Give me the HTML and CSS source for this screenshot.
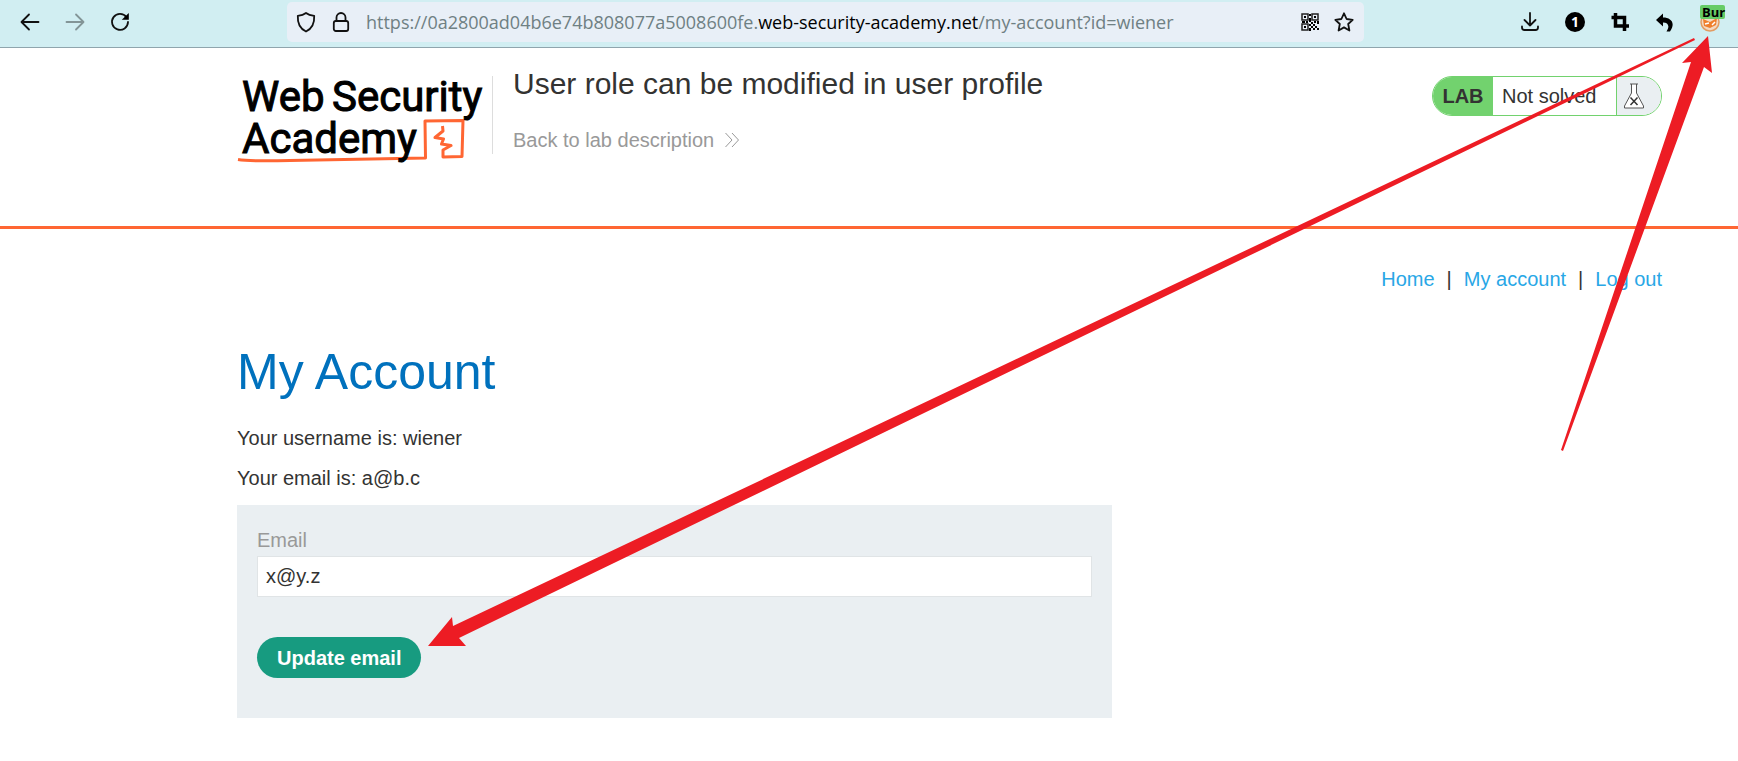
FILE: index.html
```html
<!DOCTYPE html>
<html lang="en">
<head>
<meta charset="utf-8">
<title>User role can be modified in user profile</title>
<link rel="stylesheet" href="styles.css">
</head>
<body>
<div class="toolbar">
  <div class="history">
    <button class="tool" aria-label="Back"><svg width="20" height="20" viewBox="0 0 20 20"><path d="M18.500 10H2M9 2.500L1.500 10L9 17.500" class="line"/></svg></button>
    <button class="tool faded" aria-label="Forward"><svg width="20" height="20" viewBox="0 0 20 20"><path d="M1.500 10H18M11 2.500L18.500 10L11 17.500" class="line"/></svg></button>
    <button class="tool" aria-label="Reload"><svg width="20" height="20" viewBox="0 0 20 20"><path d="M16.500 5.200A8 8 0 1 0 18 10" class="line"/><path d="M18.800 1v6.700h-7z"/></svg></button>
  </div>
  <div class="address">
    <svg width="20" height="22" viewBox="0 0 20 22"><path d="M10 2C12.500 4 15 4.500 18.200 4.800C18.600 12 16.500 17.500 10 20.500C3.500 17.500 1.400 12 1.800 4.800C5 4.500 7.500 4 10 2Z" class="line"/></svg>
    <svg width="20" height="22" viewBox="0 0 20 22"><rect x="2.800" y="10" width="14.400" height="10" rx="2" class="line"/><path d="M5.500 10V6.500a4.500 4.500 0 0 1 9 0V10" class="line"/></svg>
    <div class="url" role="textbox" aria-label="Address">https://0a2800ad04b6e74b808077a5008600fe.<span class="domain">web-security-academy.net</span>/my-account?id=wiener</div>
    <button class="tool" aria-label="QR code"><svg width="18" height="18" viewBox="0 0 18 18"><path class="qr" d="M1 1h6v6H1zM11 1h6v6h-6zM1 11h6v6H1z"/><path d="M3 3h2v2H3zM13 3h2v2h-2zM3 13h2v2H3zM8 1h2v2H8zM8 5h2v4H8zM1 8h3v2H1zM5 8h2v2H5zM10 9h2v2h-2zM13 8h2v2h-2zM16 8h2v3h-2zM8 11h2v2H8zM12 11h2v2h-2zM14 13h2v2h-2zM10 13h2v2h-2zM8 15h2v3H8zM12 15h2v2h-2zM16 15h2v2h-2z"/></svg></button>
    <button class="tool" aria-label="Bookmark"><svg width="20" height="20" viewBox="0 0 20 20"><path d="M10 1.300L12.600 7L18.700 7.800L14.200 12L15.400 18.500L10 15.400L4.600 18.500L5.800 12L1.300 7.800L7.400 7Z" class="line"/></svg></button>
  </div>
  <div class="extensions">
    <button class="tool" aria-label="Downloads"><svg width="20" height="20" viewBox="0 0 20 20"><path d="M10 1V13.500M4.500 8L10 13.500L15.500 8M2 14.500V15.500Q2 18 4.500 18H15.500Q18 18 18 15.500V14.500" class="line"/></svg></button>
    <button class="tool" aria-label="Counter"><span class="count">1</span></button>
    <button class="tool" aria-label="Crop"><svg width="20" height="20" viewBox="0 0 20 20"><path d="M5.500 1V14H19M1.500 5.500H14.500V19" fill="none" stroke="#000" stroke-width="3.500"/></svg></button>
    <button class="tool" aria-label="Undo"><svg width="20" height="20" viewBox="0 0 20 20"><path d="M1 8L8 1.500V5.500C16 5.500 21 11 15 19.500H11.500C15 14.500 13.500 10.500 8 10.500V14.500Z"/></svg></button>
    <button class="tool proxy" aria-label="Proxy: Bur"><svg width="20" height="20" viewBox="0 0 20 20"><circle cx="10" cy="10" r="9" fill="#f3d9c2" stroke="#e29b62" stroke-width="1.500"/><path d="M3 7L10 10L17 6L16 13L10 16L4 14Z" fill="#ef7f2d"/><path d="M5 12L9 11M12 13L15 10" stroke="#fff" stroke-width="1.500"/></svg><span class="badge">Bur</span></button>
  </div>
</div>

<header class="lab-header">
  <a class="logo" href="#" aria-label="Web Security Academy">
    <svg width="255" height="96" viewBox="237 70 255 96">
      <path d="M238 159.500Q250 161.500 290 160.500L425.500 158L425 121L463 120.500L462 156.500L443 157L443 150L451 145.500L441.500 144L443.500 139L435 137.500L443 131L442.500 126" class="logo-line"/>
      <g class="logo-text"><text x="242" y="111">Web</text><text x="332" y="111">Security</text><text x="242" y="153">Academy</text></g>
    </svg>
  </a>
  <div class="title">
    <h2>User role can be modified in user profile</h2>
    <a class="back" href="#">Back to lab description <svg width="16" height="16" viewBox="0 0 16 16"><path d="M1.500 1L8 8L1.500 15M8 1L14.500 8L8 15" fill="none" stroke="#999"/></svg></a>
  </div>
  <div class="status">
    <span class="lab">LAB</span>
    <p>Not solved</p>
    <span class="flask"><svg width="22" height="26" viewBox="0 0 22 26"><path d="M7 1H15M8.500 1V10L1.500 23V25H20.500V23L13.500 10V1" fill="#fff" stroke="#555"/><path d="M7.500 14.500L14.500 22M14.500 14.500L7.500 22" stroke="#333" stroke-width="1.500"/></svg></span>
  </div>
</header>

<main class="page">
  <nav class="links"><a href="#">Home</a><span>|</span><a href="#">My account</a><span>|</span><a href="#">Log out</a></nav>
  <h1>My Account</h1>
  <p class="fact">Your username is: wiener</p>
  <p class="fact">Your email is: a@b.c</p>
  <form class="email-form">
    <label for="email">Email</label>
    <input id="email" type="email" value="x@y.z">
    <button type="button">Update email</button>
  </form>
</main>

<svg class="arrows" width="1738" height="761" viewBox="0 0 1738 761" aria-hidden="true">
  <path d="M428 646L452 617L453 626L1694 38L1695 40L459 638L466 646Z"/>
  <path d="M1708 36L1682 63L1691 62L1561 450L1563 451L1704 67L1712 73Z"/>
</svg>
</body>
</html>
```
FILE: styles.css
```css
* { box-sizing: border-box; }
body {
  margin: 0;
  background: #fff;
  color: #333332;
  font: 20px/24px "Liberation Sans", Arial, sans-serif;
  overflow-x: hidden;
}
h1, h2, p { margin: 0; font-weight: 400; }
a { text-decoration: none; }
svg { display: block; flex: none; }

/* Browser toolbar */
.toolbar {
  display: flex;
  height: 48px;
  padding: 2px 18px 5px 20px;
  background: #d1eef2;
  border-bottom: 1px solid #8fa5ad;
}
.history, .extensions { display: flex; align-items: center; }
.history { gap: 25px; width: 267px; }
.extensions { gap: 25px; margin-left: 156px; }
.tool {
  position: relative;
  display: block;
  padding: 0;
  border: 0;
  background: none;
}
.faded { opacity: 0.4; }
.line {
  fill: none;
  stroke: #111;
  stroke-width: 1.8;
  stroke-linecap: round;
  stroke-linejoin: round;
}
.qr { fill: none; stroke: #222; stroke-width: 1.5; }
.address {
  display: flex;
  flex: 1;
  align-items: center;
  gap: 15px;
  padding: 0 10px 0 9px;
  background: #e8eff7;
  border-radius: 5px;
}
.url {
  flex: 1;
  color: #6f8083;
  font: 18px/24px "Open Sans", "Noto Sans", sans-serif;
  white-space: nowrap;
}
.domain { color: #000; }
.count {
  display: block;
  width: 20px;
  height: 20px;
  border-radius: 50%;
  background: #000;
  color: #fff;
  font: 700 14px/20px "Open Sans", sans-serif;
}
.badge {
  position: absolute;
  top: -7px;
  left: 0;
  width: 25px;
  padding-left: 2px;
  border-radius: 2px;
  background: #66cc66;
  color: #000;
  font: 700 13px/14px "Open Sans", sans-serif;
}

/* Lab header */
.lab-header {
  display: flex;
  align-items: flex-start;
  padding: 18px 76px 60px 237px;
  border-bottom: 3px solid #ff6633;
}
.logo { padding-top: 4px; }
.logo-text {
  font: 400 42px "Roboto", sans-serif;
  fill: #000;
  stroke: #000;
  stroke-width: 1;
}
.logo-line {
  fill: none;
  stroke: #ff6633;
  stroke-width: 3;
  stroke-linejoin: round;
}
.title {
  position: relative;
  flex: 1;
  padding-left: 21px;
}
.title::before {
  content: "";
  position: absolute;
  top: 10px;
  bottom: -2px;
  left: 0;
  border-left: 1px solid #dddddd;
}
.title h2 { margin-bottom: 26px; font-size: 30px; line-height: 36px; }
.back { display: inline-flex; align-items: center; gap: 10px; color: #999; }
.status {
  display: flex;
  width: 230px;
  height: 40px;
  margin-top: 10px;
  border: 1px solid #72d26e;
  border-radius: 20px;
  overflow: hidden;
  line-height: 38px;
}
.lab {
  width: 60px;
  background: #72d26e;
  font-weight: 700;
  text-align: center;
}
.status p { flex: 1; padding-left: 9px; }
.flask {
  width: 45px;
  padding: 6px;
  border-left: 1px solid #72d26e;
  background: #eaeff2;
}

/* Account page */
.page { padding: 38px 76px 43px 237px; }
.links { display: flex; justify-content: flex-end; gap: 12px; }
.links a { color: #29a7e6; }
h1 {
  margin: 51px 0 24px;
  color: #0071bd;
  font-size: 50px;
  line-height: 60px;
}
.fact { margin-bottom: 16px; }
.fact:last-of-type { margin-bottom: 15px; }
.email-form {
  width: 875px;
  max-width: 100%;
  padding: 20px 20px 40px;
  background: #eaeff2;
}
.email-form label { display: block; color: #999; line-height: 31px; }
.email-form input {
  display: block;
  width: 100%;
  height: 41px;
  margin-bottom: 40px;
  padding: 0 8px;
  border: 1px solid #e0e4e6;
  background: #fff;
  color: #333332;
  font: inherit;
}
.email-form button {
  height: 41px;
  padding: 0 20px;
  border: 0;
  border-radius: 21px;
  background: #179b80;
  color: #fff;
  font: inherit;
  font-weight: 700;
}

/* Annotation arrows */
.arrows {
  position: absolute;
  top: 0;
  left: 0;
  fill: #ed1c24;
  pointer-events: none;
}
```
